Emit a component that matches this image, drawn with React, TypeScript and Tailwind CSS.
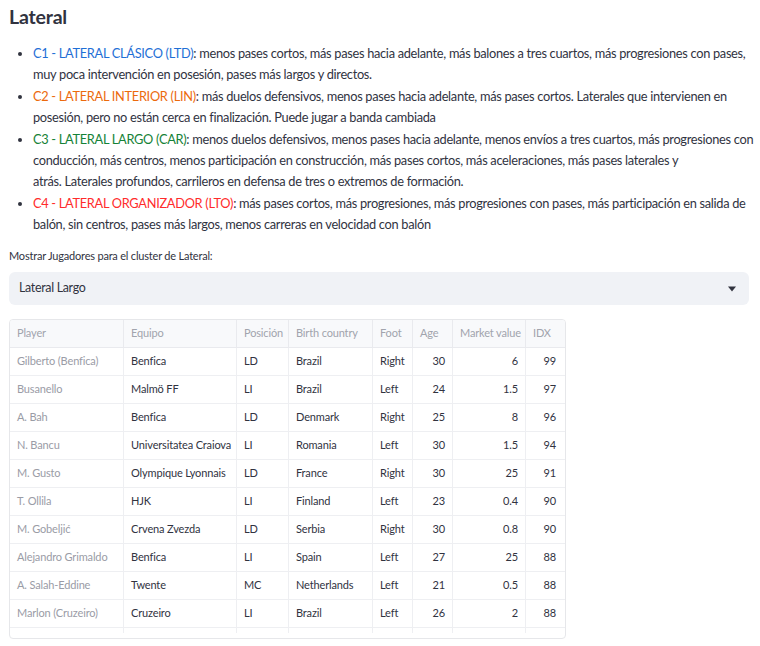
import React from "react";

const rows = [
  ["Gilberto (Benfica)", "Benfica", "LD", "Brazil", "Right", "30", "6", "99"],
  ["Busanello", "Malmö FF", "LI", "Brazil", "Left", "24", "1.5", "97"],
  ["A. Bah", "Benfica", "LD", "Denmark", "Right", "25", "8", "96"],
  ["N. Bancu", "Universitatea Craiova", "LI", "Romania", "Left", "30", "1.5", "94"],
  ["M. Gusto", "Olympique Lyonnais", "LD", "France", "Right", "30", "25", "91"],
  ["T. Ollila", "HJK", "LI", "Finland", "Left", "23", "0.4", "90"],
  ["M. Gobeljić", "Crvena Zvezda", "LD", "Serbia", "Right", "30", "0.8", "90"],
  ["Alejandro Grimaldo", "Benfica", "LI", "Spain", "Left", "27", "25", "88"],
  ["A. Salah-Eddine", "Twente", "MC", "Netherlands", "Left", "21", "0.5", "88"],
  ["Marlon (Cruzeiro)", "Cruzeiro", "LI", "Brazil", "Left", "26", "2", "88"],
  ["", "", "", "", "", "", "", ""],
];

const headers = ["Player", "Equipo", "Posición", "Birth country", "Foot", "Age", "Market value", "IDX"];
const widths = ["w-[114px]", "w-[113px]", "w-[52px]", "w-[84px]", "w-[40px]", "w-[40px]", "w-[73px]", "w-[37px]"];
const numeric = [false, false, false, false, false, true, true, true];

export default function App() {
  return (
    <div
      className="min-h-[646px] w-[760px] bg-white text-[#31333F] px-[9px] pt-[4px]"
      style={{ fontFamily: '"Source Sans Pro", Lato, "Liberation Sans", sans-serif' }}
    >
      <h3 className="text-[19.5px] font-bold leading-[26px] m-0 tracking-[-0.2px]">Lateral</h3>
      <ul className="list-disc pl-[24px] mt-[13px] text-[12.8px] tracking-[-0.3px] leading-[21px] marker:text-[#31333F]">
        <li className="mb-[1px] whitespace-nowrap">
          <span className="text-[#1f6fd6]">C1 - LATERAL CLÁSICO (LTD)</span>: menos pases cortos, más pases hacia adelante, más balones a tres cuartos, más progresiones con pases,
          <br />
          muy poca intervención en posesión, pases más largos y directos.
        </li>
        <li className="mb-[1px] whitespace-nowrap">
          <span className="text-[#ec6a0c]">C2 - LATERAL INTERIOR (LIN)</span>: más duelos defensivos, menos pases hacia adelante, más pases cortos. Laterales que intervienen en
          <br />
          posesión, pero no están cerca en finalización. Puede jugar a banda cambiada
        </li>
        <li className="mb-[1px] whitespace-nowrap">
          <span className="text-[#158237]">C3 - LATERAL LARGO (CAR)</span>: menos duelos defensivos, menos pases hacia adelante, menos envíos a tres cuartos, más progresiones con
          <br />
          conducción, más centros, menos participación en construcción, más pases cortos, más aceleraciones, más pases laterales y
          <br />
          atrás. Laterales profundos, carrileros en defensa de tres o extremos de formación.
        </li>
        <li className="whitespace-nowrap">
          <span className="text-[#ff2b2b]">C4 - LATERAL ORGANIZADOR (LTO)</span>: más pases cortos, más progresiones, más progresiones con pases, más participación en salida de
          <br />
          balón, sin centros, pases más largos, menos carreras en velocidad con balón
        </li>
      </ul>

      <div className="mt-[13px] text-[11px] tracking-[-0.2px] leading-[16px]">Mostrar Jugadores para el cluster de Lateral:</div>

      <div className="mt-[8px] h-[33px] w-[740px] rounded-[6px] bg-[#f0f2f6] flex items-center justify-between pl-[10px] pr-[12px]">
        <span className="text-[12.4px] tracking-[-0.3px]">Lateral Largo</span>
        <svg width="10" height="6" viewBox="0 0 10 6">
          <path d="M1 0.5 H9 L5 5.5 Z" fill="#31333F" />
        </svg>
      </div>

      <div className="mt-[14px] w-[557px] h-[320px] rounded-[4px] border border-[#e6e7ea] overflow-hidden">
        <div className="h-[313px] overflow-hidden">
          <div className="flex h-[28px] bg-[#f8f9fb] border-b border-[#e9eaee]">
            {headers.map((h, i) => (
              <div
                key={h}
                className={`${widths[i]} shrink-0 h-full flex items-center px-[7px] whitespace-nowrap text-[11px] tracking-[-0.15px] text-[#a1a4ad] ${i < 7 ? "border-r border-[#e9eaee]" : ""}`}
              >
                {h}
              </div>
            ))}
          </div>
          {rows.map((r, ri) => (
            <div key={ri} className="flex h-[28px] border-b border-[#eeeff2]">
              {r.map((c, i) => (
                <div
                  key={i}
                  className={`${widths[i]} shrink-0 h-full flex items-center px-[7px] text-[11px] tracking-[-0.15px] whitespace-nowrap ${numeric[i] ? "justify-end" : ""} ${i === 0 ? "text-[#9a9ca6]" : "text-[#31333F]"} ${i < 7 ? "border-r border-[#eeeff2]" : ""}`}
                >
                  {c}
                </div>
              ))}
            </div>
          ))}
        </div>
      </div>
    </div>
  );
}
